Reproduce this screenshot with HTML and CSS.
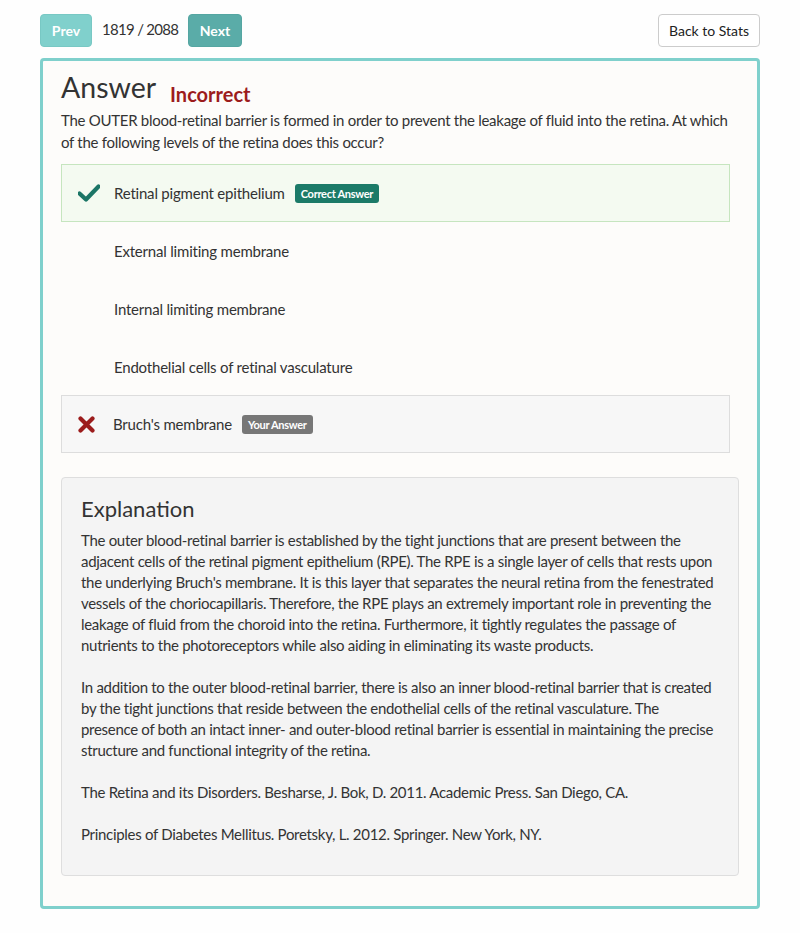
FILE: index.html
```html
<!DOCTYPE html>
<html>
<head>
<meta charset="utf-8">
<link rel="stylesheet" href="styles.css">
</head>
<body>
<div class="topbar">
  <div class="nav">
    <button class="btn btn-prev">Prev</button>
    <span class="counter">1819 / 2088</span>
    <button class="btn btn-next">Next</button>
  </div>
  <button class="btn btn-back">Back to Stats</button>
</div>
<div class="card">
  <div class="head">
    <h1 class="title">Answer</h1>
    <span class="status">Incorrect</span>
  </div>
  <p class="question">The OUTER blood-retinal barrier is formed in order to prevent the leakage of fluid into the retina. At which of the following levels of the retina does this occur?</p>
  <div class="options">
    <div class="option correct">
      <span class="icon"><svg width="22" height="18" viewBox="0 0 22 18"><path d="M1.5 9.5 L8 15.5 L20.5 2.5" fill="none" stroke="#1b7566" stroke-width="4.2" stroke-linecap="round" stroke-linejoin="round"/></svg></span>
      <span class="label">Retinal pigment epithelium</span>
      <span class="badge badge-correct">Correct Answer</span>
    </div>
    <div class="option"><span class="icon"></span><span class="label">External limiting membrane</span></div>
    <div class="option"><span class="icon"></span><span class="label">Internal limiting membrane</span></div>
    <div class="option"><span class="icon"></span><span class="label">Endothelial cells of retinal vasculature</span></div>
    <div class="option wrong">
      <span class="icon"><svg width="17" height="17" viewBox="0 0 17 17"><path d="M2.5 2.5 L14.5 14.5 M14.5 2.5 L2.5 14.5" fill="none" stroke="#9c1c1c" stroke-width="4.2" stroke-linecap="round"/></svg></span>
      <span class="label">Bruch's membrane</span>
      <span class="badge badge-yours">Your Answer</span>
    </div>
  </div>
  <div class="explanation">
    <h2 class="exp-title">Explanation</h2>
    <p>The outer blood-retinal barrier is established by the tight junctions that are present between the adjacent cells of the retinal pigment epithelium (RPE). The RPE is a single layer of cells that rests upon the underlying Bruch's membrane. It is this layer that separates the neural retina from the fenestrated vessels of the choriocapillaris. Therefore, the RPE plays an extremely important role in preventing the leakage of fluid from the choroid into the retina. Furthermore, it tightly regulates the passage of nutrients to the photoreceptors while also aiding in eliminating its waste products.</p>
    <p>In addition to the outer blood-retinal barrier, there is also an inner blood-retinal barrier that is created by the tight junctions that reside between the endothelial cells of the retinal vasculature. The presence of both an intact inner- and outer-blood retinal barrier is essential in maintaining the precise structure and functional integrity of the retina.</p>
    <p>The Retina and its Disorders. Besharse, J. Bok, D. 2011. Academic Press. San Diego, CA.</p>
    <p>Principles of Diabetes Mellitus. Poretsky, L. 2012. Springer. New York, NY.</p>
  </div>
</div>
</body>
</html>
```

FILE: styles.css
```css
* { box-sizing: border-box; }
html, body { background: #fefefe; }
body {
  margin: 0;
  padding: 14px 40px 24px 40px;
  font-family: Lato, "Open Sans", sans-serif;
  color: #333;
}
.topbar {
  display: flex;
  justify-content: space-between;
  align-items: center;
  height: 33px;
}
.nav { display: flex; align-items: center; }
.btn {
  font-family: Lato, sans-serif;
  height: 33px;
  border-radius: 4px;
  font-size: 14px;
  cursor: pointer;
  padding: 0 12px;
}
.btn-prev {
  width: 52px;
  background: #80d0cc;
  border: 1px solid #78c8c4;
  color: #fff;
  font-weight: 700;
  padding: 0;
}
.btn-next {
  width: 54px;
  background: #5aaca8;
  border: 1px solid #55a6a2;
  color: #fff;
  font-weight: 700;
  padding: 0;
}
.counter {
  font-size: 15px;
  color: #333;
  margin: 0 10px 0 10px;
  width: 76px;
  white-space: nowrap;
  letter-spacing: -0.7px;
  position: relative;
  top: -2px;
}
.btn-back {
  width: 102px;
  background: #fff;
  border: 1px solid #ccc;
  color: #222;
  font-weight: 400;
  padding: 0;
}
.card {
  margin-top: 11px;
  border: 3px solid #7fd0cc;
  border-radius: 4px;
  background: #fdfcfa;
  padding: 9px 18px 32px 18px;
  height: 851px;
}
.head { display: flex; align-items: baseline; }
.title {
  margin: 0;
  font-size: 28.5px;
  font-weight: 400;
  color: #333;
  line-height: 34px;
}
.status {
  margin-left: 14px;
  font-size: 20px;
  font-weight: 700;
  color: #9c1c1c;
  position: relative;
  top: 4px;
}
.question {
  margin: 5px 0 11px 0;
  font-size: 15px;
  line-height: 22px;
  color: #333;
  letter-spacing: -0.28px;
}
.options { margin-right: 9px; }
.option {
  display: flex;
  align-items: center;
  height: 58px;
  padding: 0 16px;
  font-size: 15px;
  color: #333;
  border: 1px solid transparent;
  letter-spacing: -0.2px;
}
.option .icon {
  width: 36px;
  display: flex;
  align-items: center;
}
.option.correct {
  background: #f4faf1;
  border-color: #c6e5bf;
}
.option.wrong {
  background: #f7f7f7;
  border-color: #dddddd;
  margin-top: -1px;
}
.option.wrong .label { margin-left: -1px; }
.badge {
  margin-left: 10px;
  font-size: 11px;
  font-weight: 700;
  color: #fff;
  border-radius: 3px;
  padding: 3px 6px;
  line-height: 13px;
  letter-spacing: -0.3px;
}
.badge-correct { background: #1b7a68; }
.badge-yours { background: #777; }
.explanation {
  margin-top: 24px;
  background: #f4f4f4;
  border: 1px solid #dedede;
  border-radius: 4px;
  padding: 18px 19px 20px 19px;
  height: 399px;
}
.exp-title {
  margin: 0 0 8px 0;
  font-size: 22px;
  font-weight: 400;
  line-height: 26px;
  color: #333;
}
.explanation p {
  margin: 0 0 21px 0;
  font-size: 15px;
  line-height: 21px;
  color: #333;
  letter-spacing: -0.3px;
}
```
